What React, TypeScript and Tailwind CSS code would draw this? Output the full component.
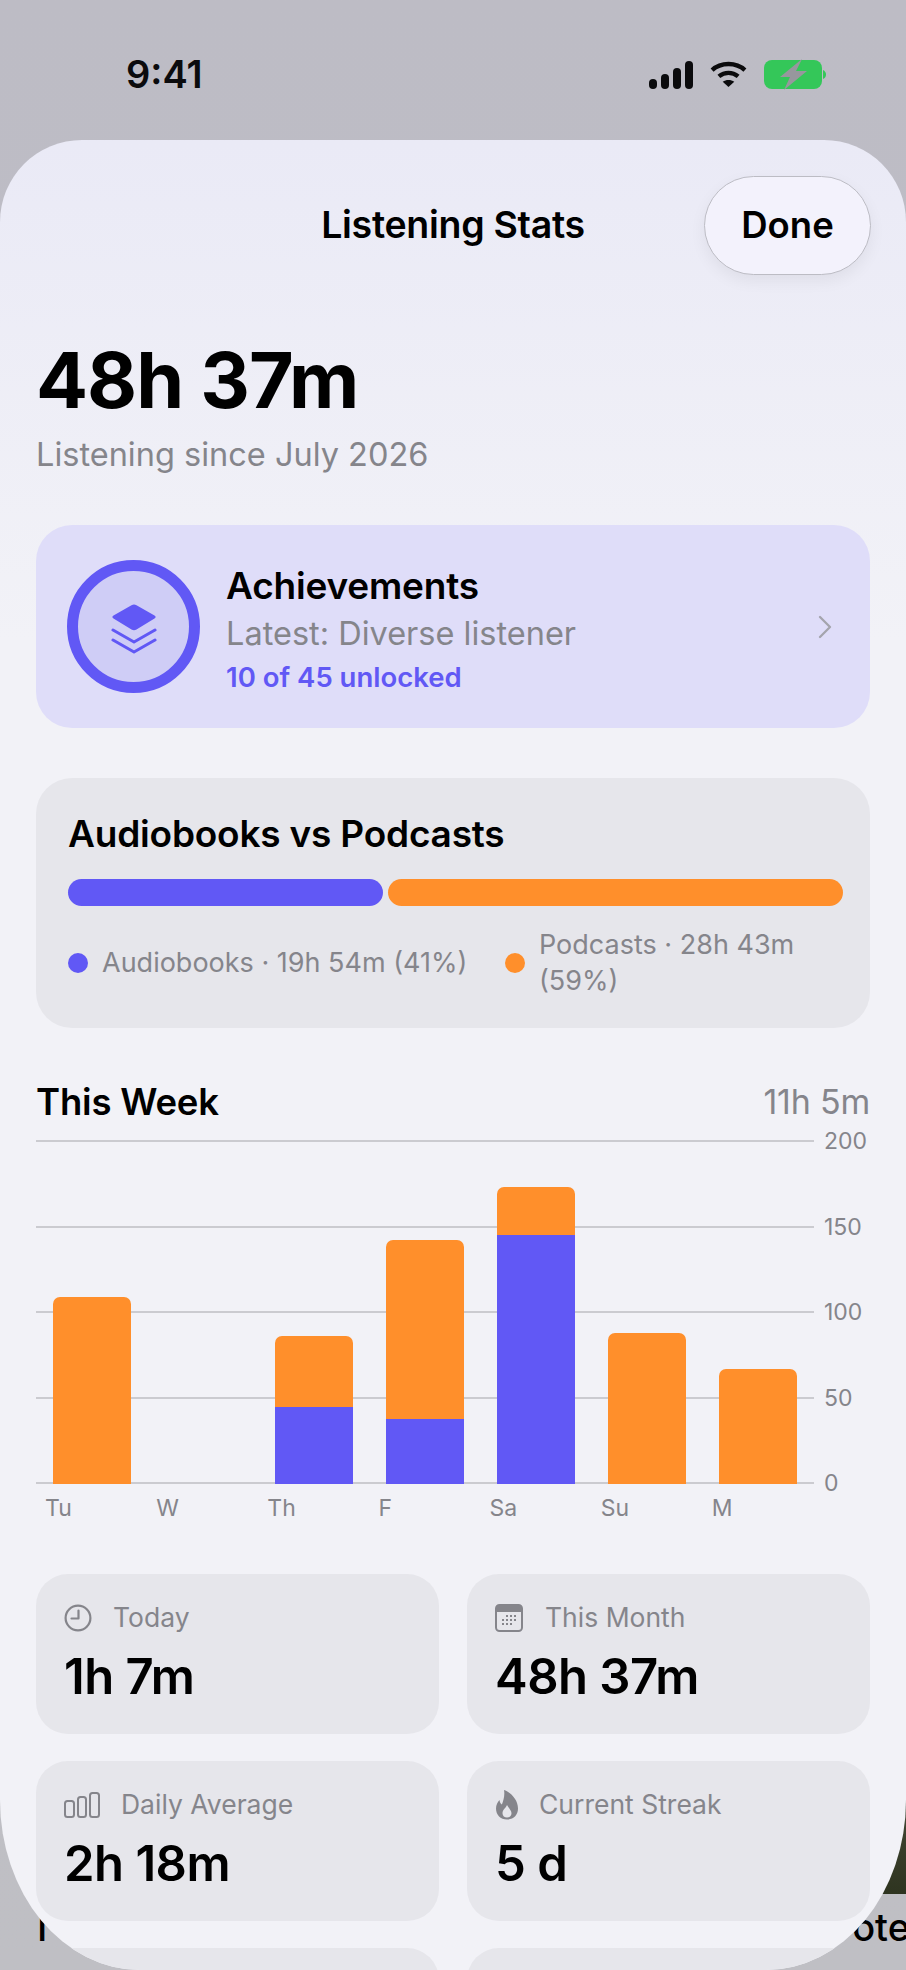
import { ChevronRight } from "lucide-react";

const AXIS = ["200", "150", "100", "50", "0"];

// heights in px above the baseline
const WEEK = [
  { day: "Tu", orange: 187, blue: 0 },
  { day: "W", orange: 0, blue: 0 },
  { day: "Th", orange: 71, blue: 77 },
  { day: "F", orange: 179, blue: 65 },
  { day: "Sa", orange: 48, blue: 249 },
  { day: "Su", orange: 151, blue: 0 },
  { day: "M", orange: 115, blue: 0 },
];

function ClockIcon() {
  return (
    <svg width="28" height="28" viewBox="0 0 28 28" fill="none" stroke="#85858b" strokeWidth="2.2">
      <circle cx="14" cy="14" r="12.4" />
      <path d="M14.5 6.5v8H7.5" strokeLinecap="round" strokeLinejoin="round" />
    </svg>
  );
}

function CalendarIcon() {
  return (
    <svg width="28" height="28" viewBox="0 0 28 28">
      <rect x="1" y="1" width="26" height="26" rx="3.5" fill="none" stroke="#85858b" strokeWidth="2" />
      <path d="M1 4.5A3.5 3.5 0 0 1 4.5 1h19A3.5 3.5 0 0 1 27 4.5V8H1z" fill="#85858b" />
      <g fill="#85858b">
        <rect x="11" y="11" width="2" height="2" />
        <rect x="15" y="11" width="2" height="2" />
        <rect x="19" y="11" width="2" height="2" />
        <rect x="7" y="15" width="2" height="2" />
        <rect x="11" y="15" width="2" height="2" />
        <rect x="15" y="15" width="2" height="2" />
        <rect x="19" y="15" width="2" height="2" />
        <rect x="7" y="19" width="2" height="2" />
        <rect x="11" y="19" width="2" height="2" />
        <rect x="15" y="19" width="2" height="2" />
      </g>
    </svg>
  );
}

function BarsIcon() {
  return (
    <svg width="36" height="26" viewBox="0 0 36 26" fill="none" stroke="#85858b" strokeWidth="2">
      <rect x="1" y="9" width="9" height="16" rx="2.5" />
      <rect x="14" y="5" width="8" height="20" rx="2.5" />
      <rect x="26" y="1" width="9" height="24" rx="2.5" />
    </svg>
  );
}

function FlameIcon() {
  return (
    <svg width="24" height="30" viewBox="0 0 24 30">
      <path
        fillRule="evenodd"
        fill="#85858b"
        d="M9 0c6 2 14 9 14 18.5C23 25 18.5 29.5 12 29.5S1 25 1 18.5C1 15 2.5 12 4.5 10c.3 2 1 3.5 2.4 4.5C8.500 10.500 10 5 9 0zM12 15c-1 3-4.500 4.500-4.500 8.200 0 2.700 2 4.300 4.500 4.300s4.500-1.600 4.500-4.300C16.500 20 13.500 18 12 15z"
      />
    </svg>
  );
}

function StatCard({ icon, label, value, gap }: { icon: React.ReactNode; label: string; value: string; gap: string }) {
  return (
    <div className="h-[160px] rounded-[32px] bg-[#e6e6eb] pl-[28px] pt-[30px]">
      <div className={`flex h-[28px] items-center ${gap} text-[26.5px] text-[#85858b]`}>
        {icon}
        <span>{label}</span>
      </div>
      <div className="mt-[17px] text-[49px] leading-[56px] font-semibold tracking-[-0.5px] text-black">{value}</div>
    </div>
  );
}

export default function App() {
  return (
    <div className="relative h-[1970px] w-[906px] overflow-hidden bg-gradient-to-b from-[#bdbcc5] to-[#bfbfc4] font-['Inter',sans-serif]">
      {/* status bar */}
      <div className="flex h-[140px] items-start justify-between pl-[126px] pr-[80px] pt-[51px]">
        <span className="text-[38px] leading-[46px] font-semibold text-[#0b0b0d]">9:41</span>
        <div className="mt-[8px] flex items-center gap-[17px]">
          <svg width="44" height="28" viewBox="0 0 44 28" fill="#0b0b0d">
            <rect x="0" y="18" width="8" height="10" rx="4" />
            <rect x="12" y="13" width="8" height="15" rx="4" />
            <rect x="24" y="7" width="8" height="21" rx="4" />
            <rect x="36" y="0" width="8" height="28" rx="4" />
          </svg>
          <svg width="37" height="27" viewBox="0 0 38 28" fill="none" stroke="#0b0b0d" strokeWidth="4.500">
            <path d="M2 9.500C11 1 27 1 36 9.500" />
            <path d="M9 16c6-5 14-5 20 0" />
            <path d="M19 27l-6-5.500c3.500-2.500 8.500-2.500 12 0z" fill="#0b0b0d" stroke="none" />
          </svg>
          <svg width="62" height="31" viewBox="0 0 62 31">
            <rect x="0" y="1" width="58" height="29" rx="8" fill="#34c759" />
            <path d="M59 11c2 1 3 2.500 3 4.500s-1 3.500-3 4.500z" fill="#34c759" />
            <path d="M38 0L16 18h10l-6 13 23-19H32z" fill="#97979d" />
          </svg>
        </div>
      </div>

      {/* what the sheet covers at the bottom */}
      <div className="absolute top-[1905px] left-[37px] text-[38px] leading-[44px] font-medium text-black">I</div>
      <div className="absolute top-[1905px] right-[-4px] text-[38px] leading-[44px] font-medium text-black">ote</div>
      <div className="absolute top-[1750px] right-0 h-[144px] w-[30px] bg-gradient-to-b from-[#8c8c84] via-[#3f4330] to-[#2e3420]" />

      {/* sheet */}
      <div className="relative h-[1830px] overflow-hidden rounded-t-[82px] rounded-b-[140px_170px] bg-[#f2f2f7] bg-gradient-to-b from-[#eaeaf6] to-[#f2f2f7] bg-[length:100%_500px] bg-no-repeat">
        <div className="relative flex h-[170px] items-center justify-center">
          <span className="text-[37.5px] font-semibold tracking-[-0.3px] text-black">Listening Stats</span>
          <button className="absolute top-[36px] right-[35px] h-[99px] w-[167px] rounded-[50px] border border-[#bcbcc4] bg-[#f3f2fc] text-[36.5px] font-semibold text-black shadow-[0_6px_16px_rgba(0,0,0,0.06)]">
            Done
          </button>
        </div>

        <div className="px-[36px]">
          <div className="mt-[28px] text-[77px] leading-[84px] font-bold tracking-[-1px] text-black">48h 37m</div>
          <div className="mt-[13px] text-[32.5px] leading-[40px] text-[#85858b]">Listening since July 2026</div>

          {/* achievements */}
          <div className="mt-[50px] flex h-[203px] items-center rounded-[36px] bg-[#dfddf9] pl-[31px] pr-[25px]">
            <div className="flex h-[133px] w-[133px] shrink-0 items-center justify-center rounded-full border-[11px] border-[#6158f5] bg-[#cfcdf6]">
              <svg width="46" height="50" viewBox="0 0 46 50" fill="#6158f5" className="mt-[4px]">
                <path d="M20.500 1.200a5 5 0 0 1 5 0l18 10.300c1.500.9 1.500 2.100 0 3L25.500 25.500a5 5 0 0 1-5 0l-18-11c-1.500-.9-1.500-2.100 0-3z" />
                <path d="M2 26l21 12L44 26" fill="none" stroke="#6158f5" strokeWidth="3" strokeLinecap="round" strokeLinejoin="round" />
                <path d="M2 36l21 12L44 36" fill="none" stroke="#6158f5" strokeWidth="3" strokeLinecap="round" strokeLinejoin="round" />
              </svg>
            </div>
            <div className="ml-[26px] mt-[4px] flex-1">
              <div className="text-[37px] leading-[44px] font-semibold tracking-[-0.2px] text-black">Achievements</div>
              <div className="mt-[6px] text-[32.5px] leading-[40px] text-[#85858b]">Latest: Diverse listener</div>
              <div className="mt-[6px] text-[27.5px] leading-[34px] font-semibold text-[#6158f5]">10 of 45 unlocked</div>
            </div>
            <ChevronRight size={40} strokeWidth={1.4} className="text-[#a4a4ad]" />
          </div>

          {/* audiobooks vs podcasts */}
          <div className="mt-[50px] h-[250px] rounded-[36px] bg-[#e6e6eb] pl-[32px] pr-[27px] pt-[34px]">
            <div className="text-[37px] leading-[44px] font-semibold tracking-[-0.2px] text-black">Audiobooks vs Podcasts</div>
            <div className="mt-[23px] flex h-[27px] gap-[5px]">
              <div className="w-[315px] rounded-[14px] bg-[#6158f5]" />
              <div className="flex-1 rounded-[14px] bg-[#ff8f2b]" />
            </div>
            <div className="mt-[21px] flex items-center text-[27px] leading-[36px] text-[#85858b]">
              <span className="h-[20px] w-[20px] shrink-0 rounded-full bg-[#6158f5]" />
              <span className="ml-[14px] w-[403px] shrink-0">Audiobooks · 19h 54m (41%)</span>
              <span className="h-[20px] w-[20px] shrink-0 rounded-full bg-[#ff8f2b]" />
              <span className="ml-[14px] pr-[20px]">Podcasts · 28h 43m (59%)</span>
            </div>
          </div>

          {/* this week */}
          <div className="mt-[52px] flex items-center justify-between">
            <span className="text-[36.5px] leading-[44px] font-semibold tracking-[-0.2px] text-black">This Week</span>
            <span className="text-[34px] leading-[44px] tracking-[-0.2px] text-[#85858b]">11h 5m</span>
          </div>
          <div className="mt-[16px] flex">
            <div className="relative h-[344px] w-[778px]">
              <div className="flex h-full flex-col justify-between">
                {AXIS.map((a) => (
                  <div key={a} className="h-[2px] bg-[#cbcbd0]" />
                ))}
              </div>
              <div className="absolute inset-0 grid grid-cols-7 items-end">
                {WEEK.map((d) => (
                  <div key={d.day} className="flex flex-col items-center justify-end">
                    {d.orange > 0 && (
                      <div className="w-[78px] rounded-t-[7px] bg-[#ff8f2b]" style={{ height: d.orange }} />
                    )}
                    {d.blue > 0 && <div className="w-[78px] bg-[#6158f5]" style={{ height: d.blue }} />}
                  </div>
                ))}
              </div>
            </div>
            <div className="ml-[10px] flex h-[344px] flex-col justify-between text-[23px] leading-[2px] text-[#85858b]">
              {AXIS.map((a) => (
                <span key={a} className="h-[2px]">{a}</span>
              ))}
            </div>
          </div>
          <div className="mt-[10px] grid w-[778px] grid-cols-7 text-[23px] leading-[28px] text-[#85858b]">
            {WEEK.map((d) => (
              <span key={d.day} className="pl-[9px]">{d.day}</span>
            ))}
          </div>

          {/* stat cards */}
          <div className="mt-[52px] grid grid-cols-2 gap-x-[28px] gap-y-[27px]">
            <StatCard icon={<ClockIcon />} label="Today" value="1h 7m" gap="gap-[21px]" />
            <StatCard icon={<CalendarIcon />} label="This Month" value="48h 37m" gap="gap-[22px]" />
            <StatCard icon={<BarsIcon />} label="Daily Average" value="2h 18m" gap="gap-[21px]" />
            <StatCard icon={<FlameIcon />} label="Current Streak" value="5 d" gap="gap-[20px]" />
            <div className="h-[160px] rounded-[32px] bg-[#e6e6eb]" />
            <div className="h-[160px] rounded-[32px] bg-[#e6e6eb]" />
          </div>
        </div>
      </div>
    </div>
  );
}
